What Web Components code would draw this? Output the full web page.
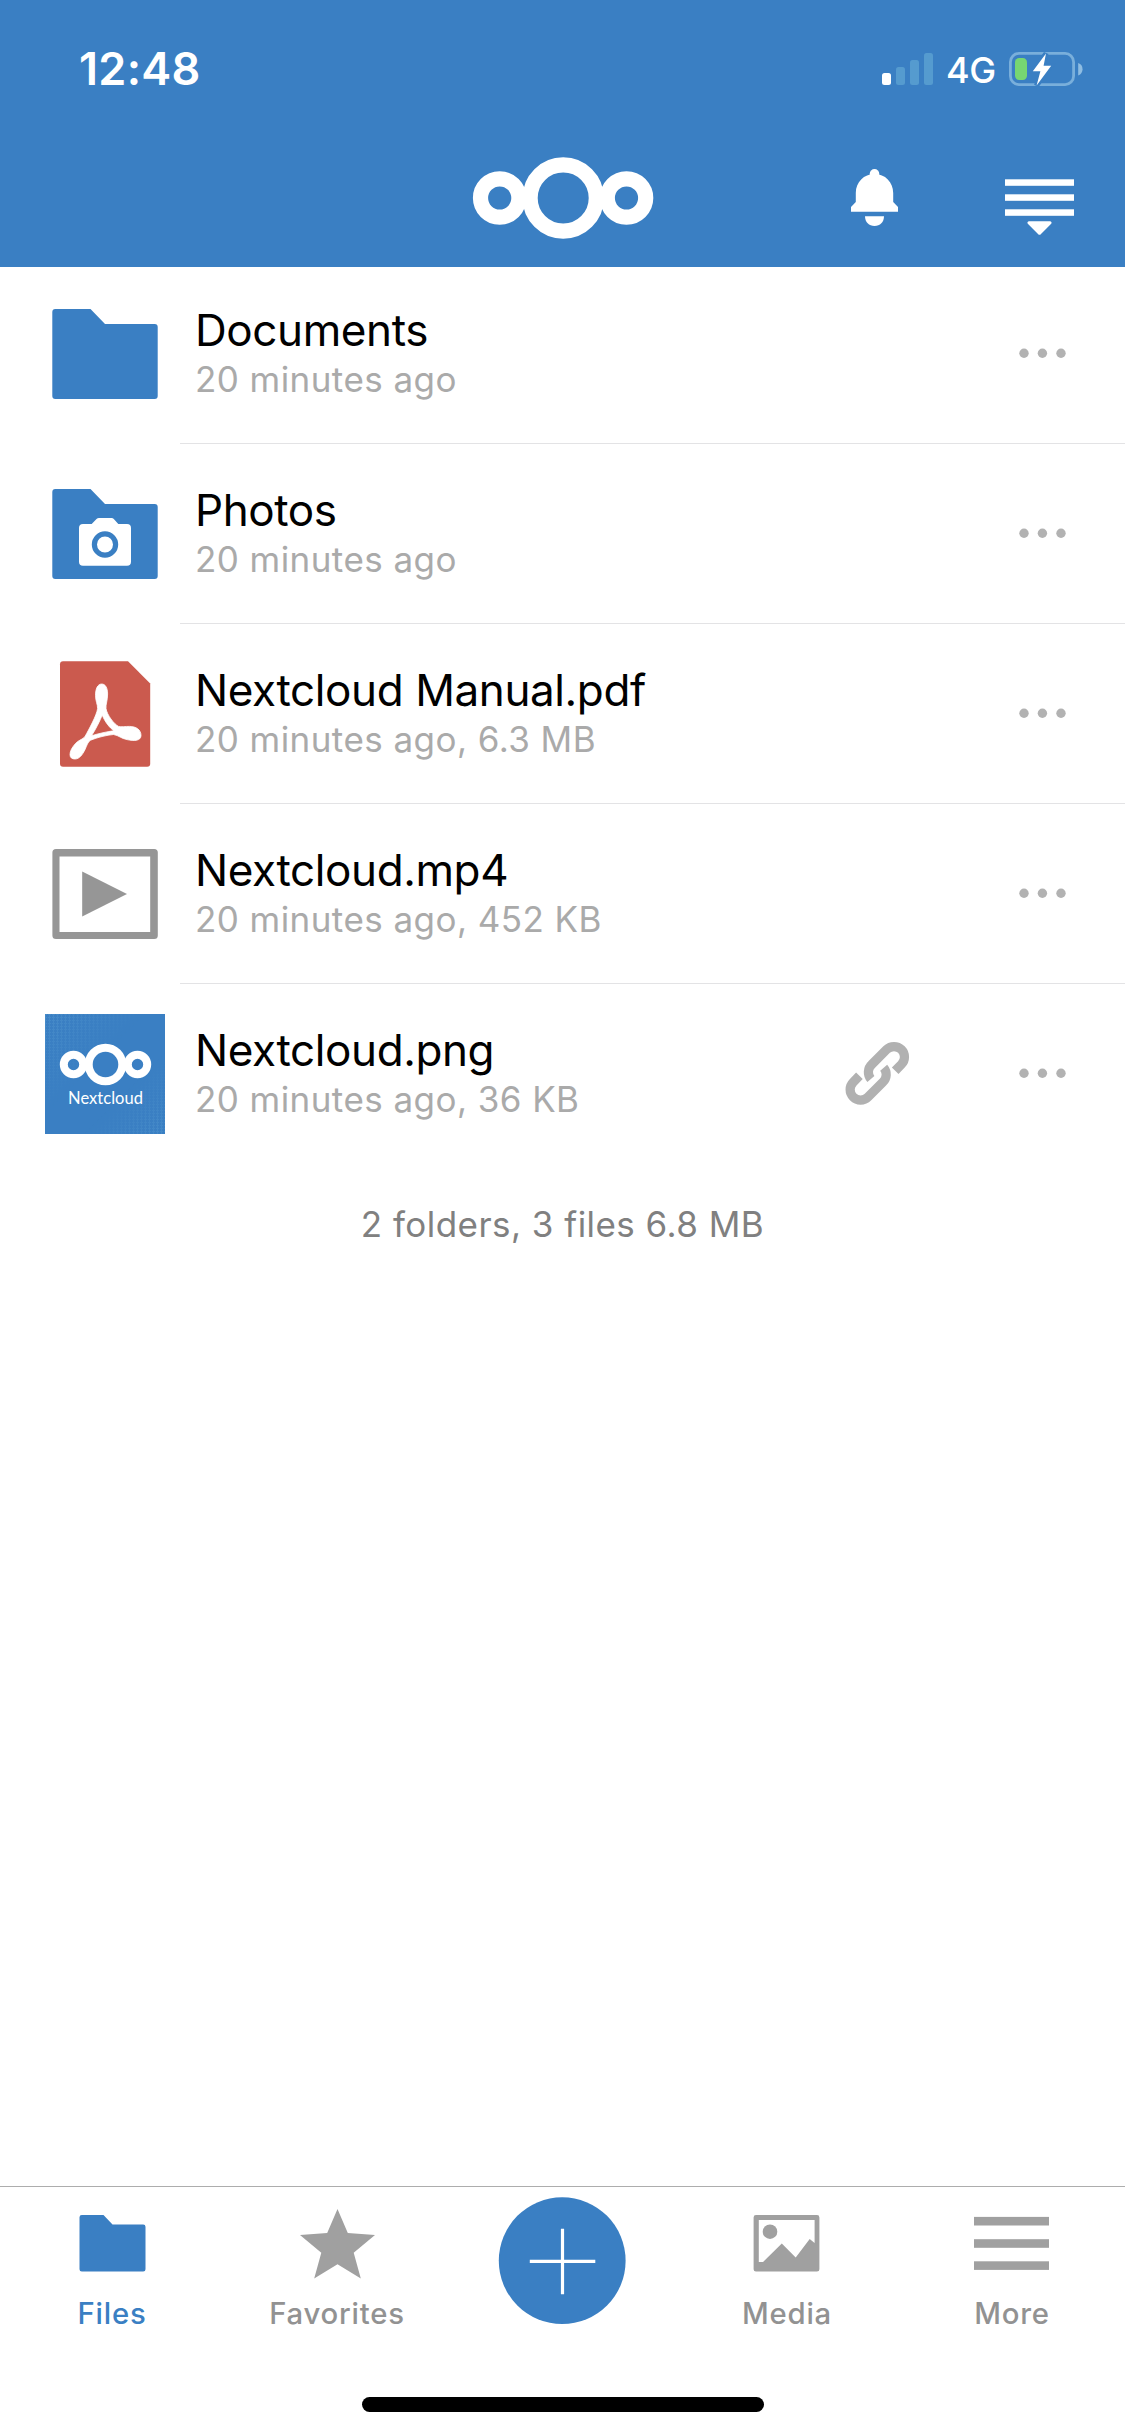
<!DOCTYPE html>
<html lang="en">
<head>
<meta charset="utf-8">
<title>Files</title>
<style>
  html, body { margin: 0; background: #fff; }
  body { font-family: Inter, "Liberation Sans", sans-serif; color: #000; }
</style>
</head>
<body>
<cloud-app></cloud-app>

<script>
const BLUE = '#3a7fc3';

/* Every icon is drawn in screen units; size comes from its viewBox. */
const ICONS = {
  signal: ['880 50 56 38', `
    <rect x="882" y="73" width="9" height="12" rx="2.5" fill="#fff"/>
    <g fill="#559bcf"><rect x="896" y="67" width="9" height="18" rx="2.5"/>
    <rect x="910" y="60" width="9" height="25" rx="2.5"/>
    <rect x="924" y="53" width="9" height="32" rx="2.5"/></g>`],
  battery: ['1008 50 76 38', `
    <rect x="1010.4" y="53.4" width="63.2" height="31.2" rx="8.5" fill="none" stroke="#79afdb" stroke-width="2.8"/>
    <path d="M1078.2 63v12.4a6.6 6.6 0 0 0 0-12.4z" fill="#8fbde2"/>
    <rect x="1015" y="58" width="12" height="22" rx="4.2" fill="#77d672"/>
    <path d="M1046 53.5L1033 71h8L1036.500 85.500 1051 66h-8z" fill="${BLUE}" stroke="${BLUE}" stroke-width="5"/>
    <path d="M1046 53.500L1032.800 71.200h7.600L1036.600 85.500 1051.200 65.800h-7.600z" fill="#fff"/>`],
  logo: ['472 156 182 84', `
    <g fill="none" stroke="#fff" stroke-width="15.200"><circle cx="499.700" cy="198" r="19.200"/>
    <circle cx="563.200" cy="198" r="33.100"/><circle cx="626.500" cy="198" r="19.200"/></g>`],
  bell: ['850 168 50 60', `
    <g fill="#fff"><circle cx="874.500" cy="173.800" r="4.800"/>
    <path d="M874.500 174C864 174 855.800 182 855.800 193V202L851 207V211.800H898V207L893.200 202V193C893.200 182 885 174 874.500 174Z"/>
    <path d="M865 216.200H884C884 222 880 226 874.500 226S865 222 865 216.200Z"/></g>`],
  sort: ['1004 178 72 58', `
    <g fill="#fff"><rect x="1005" y="179.300" width="69" height="6.500"/><rect x="1005" y="194.300" width="69" height="6.500"/>
    <rect x="1005" y="209.300" width="69" height="6.500"/>
    <path d="M1028.800 221.200H1050.200Q1052.300 221.800 1051.200 223.800L1041 233.900Q1039.500 235.600 1038 233.900L1027.800 223.800Q1026.700 221.800 1028.800 221.200Z"/></g>`],
  folder: ['45 294 120 120', `
    <path fill="${BLUE}" d="M55.300 309H90.500L105 324H154.700Q157.700 324 157.700 327V396Q157.700 399 154.700 399H55.300Q52.300 399 52.300 396V312Q52.300 309 55.300 309Z"/>`],
  photos: ['45 474 120 120', `
    <path fill="${BLUE}" d="M55.300 489H90.500L105 504H154.700Q157.700 504 157.700 507V576Q157.700 579 154.700 579H55.300Q52.300 579 52.300 576V492Q52.300 489 55.300 489Z"/>
    <path fill="#fff" d="M83 524H91.700L96.500 519Q97.500 518 99 518H111.500Q113 518 113.800 519L118.300 524H127Q131 524 131 528V561.700Q131 565.700 127 565.700H83Q79 565.700 79 561.700V528Q79 524 83 524Z"/>
    <circle cx="105" cy="544.500" r="10.600" fill="none" stroke="${BLUE}" stroke-width="5.200"/>`],
  pdf: ['45 654 120 120', `
    <path fill="#cb5a4e" d="M63 661.300H128L150.200 683.500V763.700Q150.200 766.700 147.200 766.700H63Q60 766.700 60 763.700V664.300Q60 661.300 63 661.300Z"/>
    <path fill="#fff" stroke="#fff" stroke-width=".8" stroke-linejoin="round" fill-rule="evenodd" d="M101.700 684C97.500 684 95.500 689 95.500 695.500C95.500 701 97.700 704.500 97.600 708.500C97 715 88 731 85.300 736C83.500 739.500 79 739.500 75.500 743.500C72 747.500 70 751 70 754.500C70 757.800 72 759 75 759C79.500 759 82.500 754.500 84.800 750C87 745.500 87.500 742 90.600 740.200C97 737.500 107 735 113.500 734.500C119 735.500 121 738.500 127 739.600C134 741.200 141 741 141 735.500C141 729.500 136 726.500 129.500 726.400C125 726.300 121.500 727.200 118.500 726.400C114 724 107 715 106 708.500C105.700 704 107.600 700.500 107.600 694C107.600 688 105.500 684 101.700 684ZM102.200 715C104.500 721 109.500 728 114 730.700C108 731.500 98 733.600 91.500 735.800C95 730.500 100.500 720 102.200 715Z"/>`],
  video: ['45 834 120 120', `
    <path fill="#969696" fill-rule="evenodd" d="M56 849H154.200Q157.800 849 157.800 852.500V935.500Q157.800 939 154.200 939H56Q52.400 939 52.400 935.500V852.500Q52.400 849 56 849ZM59.500 856.500V932H150.200V856.500Z"/>
    <path fill="#969696" d="M82.200 871.500V916.500L127 894Z"/>`],
  thumb: ['45 1014 120 120', `
    <defs><pattern id="d" width="4" height="3" patternUnits="userSpaceOnUse"><path d="M0 .5H3M1.500 0V3" stroke="#5b9fd4" stroke-width="1" opacity=".5"/></pattern>
    <linearGradient id="a" x1="0" y1="0" x2="1" y2="1"><stop offset="0" stop-color="#fff" stop-opacity=".75"/><stop offset=".42" stop-color="#fff" stop-opacity="0"/><stop offset=".66" stop-color="#fff" stop-opacity="0"/><stop offset="1" stop-color="#fff" stop-opacity=".7"/></linearGradient>
    <mask id="m"><rect x="45" y="1014" width="120" height="120" fill="url(#a)"/></mask></defs>
    <rect x="45" y="1014" width="120" height="120" fill="${BLUE}"/>
    <rect x="45" y="1014" width="120" height="120" fill="url(#d)" mask="url(#m)"/>
    <g fill="none" stroke="#fff" stroke-width="8"><circle cx="73.500" cy="1064.500" r="9.700"/>
    <circle cx="105.500" cy="1064.500" r="16.800"/><circle cx="137.500" cy="1064.500" r="9.700"/></g>
    <text x="68" y="1103.500" textLength="75" font-family="Lato, sans-serif" font-weight="400" font-size="16.500" fill="#fff">Nextcloud</text>`],
  link: ['844 1040 67 67', `
    <g fill="none" stroke="#b1b1b1" stroke-width="9.200">
    <path id="h" d="M895.200 1070.800L901.400 1064.400A10.400 10.400 0 0 0 886.600 1049.600L871.600 1064.600A10.400 10.400 0 0 0 870.900 1078.900"/>
    <use href="#h" transform="rotate(180 877.300 1073.300)"/></g>`],
  dots: ['1018 1067 50 12', `
    <g fill="#b2b2b2"><circle cx="1024" cy="1073.300" r="4.700"/><circle cx="1042.400" cy="1073.300" r="4.700"/><circle cx="1061" cy="1073.300" r="4.700"/></g>`],
  files: ['72 2205 81 76', `
    <path fill="${BLUE}" d="M81.800 2215H103.500L112.500 2224.500H143.200Q145.500 2224.500 145.500 2226.800V2269.300Q145.500 2271.600 143.200 2271.600H81.800Q79.500 2271.600 79.500 2269.300V2217.300Q79.500 2215 81.800 2215Z"/>`],
  star: ['297 2205 81 76', `
    <path fill="#a0a0a0" d="M337.500 2209L347.800 2233 375 2235 353.700 2252.700 360.800 2278.500 337.500 2264.200 314.200 2278.500 321.300 2252.700 300 2235 327.200 2233Z"/>`],
  media: ['747 2205 81 76', `
    <path fill="#a0a0a0" fill-rule="evenodd" d="M756 2215H817Q819.400 2215 819.400 2217.400V2269.200Q819.400 2271.600 817 2271.600H756Q753.600 2271.600 753.600 2269.200V2217.400Q753.600 2215 756 2215ZM758.800 2220V2262H763L781.800 2243.400 795.700 2257.400 809.700 2239 814.600 2243V2220Z"/>
    <circle cx="770" cy="2231.700" r="7.300" fill="#a0a0a0"/>`],
  more: ['972 2205 81 76', `
    <g fill="#a0a0a0"><rect x="974" y="2216.900" width="75" height="8.600"/><rect x="974" y="2239.200" width="75" height="8.600"/><rect x="974" y="2261.300" width="75" height="8.600"/></g>`],
  plus: ['498 2196 129 129', `
    <circle cx="562.200" cy="2260.700" r="63.400" fill="${BLUE}"/>
    <path d="M562.500 2228.800V2294.300M529.800 2261.400H595.300" stroke="#fff" stroke-width="3.200" fill="none"/>`]
};

function define(tag, css, html) {
  customElements.define(tag, class extends HTMLElement {
    constructor() {
      super();
      this.attachShadow({ mode: 'open' });
    }
    connectedCallback() {
      const t = document.createElement('template');
      t.innerHTML = `<style>${css}</style>${typeof html === 'function' ? html(this) : html}`;
      this.shadowRoot.replaceChildren(t.content.cloneNode(true));
    }
  });
}

define('cloud-icon', `:host{display:block;flex:none} svg{display:block}`, el => {
  const [box, body] = ICONS[el.getAttribute('name')];
  const [, , w, h] = box.split(' ');
  return `<svg width="${w}" height="${h}" viewBox="${box}">${body}</svg>`;
});

define('status-bar', `
  :host{display:flex;align-items:flex-start;height:132px;box-sizing:border-box;padding:42px 41px 0 79px;color:#fff}
  .time{font-weight:600;font-size:45px;line-height:54px;letter-spacing:.3px;flex:1}
  .net{font-weight:450;font-size:36px;line-height:44px;letter-spacing:-.4px;width:62px;margin:6px 0 0 10px}
  cloud-icon{margin-top:8px}`, `
  <span class="time">12:48</span><cloud-icon name="signal"></cloud-icon>
  <span class="net">4G</span><cloud-icon name="battery"></cloud-icon>`);

define('nav-bar', `
  :host{display:grid;grid-template-columns:1fr 182px 1fr;height:135px;align-items:start}
  .logo{grid-column:2;margin-top:24px}
  .actions{display:flex;justify-content:space-between;padding:36px 49px 0 196px}
  .sort{margin-top:10px}`, `
  <cloud-icon class="logo" name="logo"></cloud-icon>
  <div class="actions"><cloud-icon name="bell"></cloud-icon><cloud-icon class="sort" name="sort"></cloud-icon></div>`);

define('file-row', `
  :host{display:flex;height:180px}
  .icon{width:120px;margin:30px 15px 0 45px}
  .body{flex:1;display:flex;border-bottom:1px solid #e3e3e5;padding:0 57px 0 15px}
  :host([last]) .body{border-color:transparent}
  .text{flex:1;padding-top:39px;white-space:nowrap}
  .name{font-size:44px;line-height:54px;letter-spacing:-.4px}
  .meta{font-size:35px;line-height:42px;letter-spacing:.44px;color:#aaa;margin-top:1px}
  .link{margin:56px 107px 0 0}
  .dots{margin-top:83px}`, el => `
  <cloud-icon class="icon" name="${el.getAttribute('icon')}"></cloud-icon>
  <div class="body"><div class="text"><div class="name"><slot></slot></div><div class="meta"><slot name="meta"></slot></div></div>
  ${el.hasAttribute('shared') ? '<cloud-icon class="link" name="link"></cloud-icon>' : ''}
  <cloud-icon class="dots" name="dots"></cloud-icon></div>`);

define('tab-item', `
  :host{display:flex;flex:1;flex-direction:column;align-items:center;padding-top:18px;color:#929292;
    font-weight:470;font-size:29.3px;line-height:36px;letter-spacing:.8px}
  :host([active]){color:${BLUE}}
  .label{margin:15px 1px 0 0}`, el => `
  <cloud-icon name="${el.getAttribute('icon')}"></cloud-icon><span class="label"><slot></slot></span>`);

define('tab-bar', `
  :host{display:flex;flex-direction:column;height:250px;box-sizing:border-box;border-top:1px solid #adadad}
  .tabs{display:flex;height:210px}
  .add{flex:1;display:flex;justify-content:center;padding-top:9px}
  .home{width:402px;height:15px;border-radius:7.5px;background:#000;margin:0 auto}`, `
  <div class="tabs"><tab-item icon="files" active>Files</tab-item><tab-item icon="star">Favorites</tab-item>
  <div class="add"><cloud-icon name="plus"></cloud-icon></div>
  <tab-item icon="media">Media</tab-item><tab-item icon="more">More</tab-item></div>
  <div class="home"></div>`);

define('cloud-app', `
  :host{display:flex;flex-direction:column;width:1125px;height:2436px;background:#fff;overflow:hidden}
  header{background:${BLUE};height:267px;flex:none}
  main{flex:1;margin-top:-3px}
  .summary{margin-top:39px;text-align:center;font-size:35px;line-height:42px;letter-spacing:.46px;color:#808080}`, `
  <header><status-bar></status-bar><nav-bar></nav-bar></header>
  <main>
    <file-row icon="folder">Documents<span slot="meta">20 minutes ago</span></file-row>
    <file-row icon="photos">Photos<span slot="meta">20 minutes ago</span></file-row>
    <file-row icon="pdf">Nextcloud Manual.pdf<span slot="meta">20 minutes ago, 6.3 MB</span></file-row>
    <file-row icon="video">Nextcloud.mp4<span slot="meta">20 minutes ago, 452 KB</span></file-row>
    <file-row icon="thumb" shared last>Nextcloud.png<span slot="meta">20 minutes ago, 36 KB</span></file-row>
    <div class="summary">2 folders, 3 files 6.8 MB</div>
  </main>
  <tab-bar></tab-bar>`);
</script>
</body>
</html>
